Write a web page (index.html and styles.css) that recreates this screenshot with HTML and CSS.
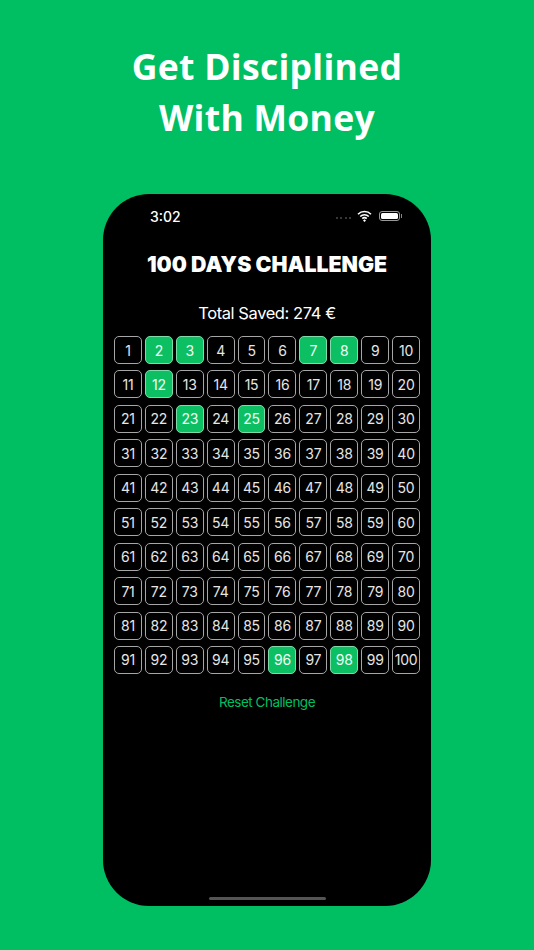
FILE: index.html
```html
<!DOCTYPE html>
<html lang="en">
<head>
<meta charset="utf-8">
<title>100 Days Challenge</title>
<link rel="stylesheet" href="styles.css">
</head>
<body>
<h1 class="headline">Get Disciplined<br>With Money</h1>
<main class="phone">
  <div class="status">
    <span class="time">3:02</span>
    <span class="status-icons">
      <span class="signal"><i></i><i></i><i></i><i></i></span>
      <svg class="wifi" width="15" height="12" viewBox="0 0 15 12"><path d="M1 4.2a9.2 9.2 0 0 1 13 0M3.2 6.5a6 6 0 0 1 8.6 0M5.3 8.6a3 3 0 0 1 4.4 0" fill="none" stroke="#fff" stroke-width="1.6"/><path d="M7.5 9.2l1.5 1.4-1.5 1.4-1.5-1.4z" fill="#fff"/></svg>
      <span class="battery"><span class="battery-fill"></span></span><span class="battery-cap"></span>
    </span>
  </div>
  <h2 class="title">100 DAYS CHALLENGE</h2>
  <p class="total">Total Saved: 274 €</p>
  <div class="grid">
    <div class="cell">1</div><div class="cell on">2</div><div class="cell on">3</div><div class="cell">4</div><div class="cell">5</div><div class="cell">6</div><div class="cell on">7</div><div class="cell on">8</div><div class="cell">9</div><div class="cell">10</div>
    <div class="cell">11</div><div class="cell on">12</div><div class="cell">13</div><div class="cell">14</div><div class="cell">15</div><div class="cell">16</div><div class="cell">17</div><div class="cell">18</div><div class="cell">19</div><div class="cell">20</div>
    <div class="cell">21</div><div class="cell">22</div><div class="cell on">23</div><div class="cell">24</div><div class="cell on">25</div><div class="cell">26</div><div class="cell">27</div><div class="cell">28</div><div class="cell">29</div><div class="cell">30</div>
    <div class="cell">31</div><div class="cell">32</div><div class="cell">33</div><div class="cell">34</div><div class="cell">35</div><div class="cell">36</div><div class="cell">37</div><div class="cell">38</div><div class="cell">39</div><div class="cell">40</div>
    <div class="cell">41</div><div class="cell">42</div><div class="cell">43</div><div class="cell">44</div><div class="cell">45</div><div class="cell">46</div><div class="cell">47</div><div class="cell">48</div><div class="cell">49</div><div class="cell">50</div>
    <div class="cell">51</div><div class="cell">52</div><div class="cell">53</div><div class="cell">54</div><div class="cell">55</div><div class="cell">56</div><div class="cell">57</div><div class="cell">58</div><div class="cell">59</div><div class="cell">60</div>
    <div class="cell">61</div><div class="cell">62</div><div class="cell">63</div><div class="cell">64</div><div class="cell">65</div><div class="cell">66</div><div class="cell">67</div><div class="cell">68</div><div class="cell">69</div><div class="cell">70</div>
    <div class="cell">71</div><div class="cell">72</div><div class="cell">73</div><div class="cell">74</div><div class="cell">75</div><div class="cell">76</div><div class="cell">77</div><div class="cell">78</div><div class="cell">79</div><div class="cell">80</div>
    <div class="cell">81</div><div class="cell">82</div><div class="cell">83</div><div class="cell">84</div><div class="cell">85</div><div class="cell">86</div><div class="cell">87</div><div class="cell">88</div><div class="cell">89</div><div class="cell">90</div>
    <div class="cell">91</div><div class="cell">92</div><div class="cell">93</div><div class="cell">94</div><div class="cell">95</div><div class="cell on">96</div><div class="cell">97</div><div class="cell on">98</div><div class="cell">99</div><div class="cell">100</div>
  </div>
  <p class="reset">Reset Challenge</p>
  <div class="home-bar"></div>
</main>
</body>
</html>
```
FILE: styles.css
```css
* { box-sizing: border-box; }
html, body { margin: 0; height: 950px; overflow: hidden; }
body {
  background: #00bf63;
  font-family: Inter, "Liberation Sans", sans-serif;
  display: flex;
  flex-direction: column;
  align-items: center;
}
.headline {
  margin: 41px 0 0;
  height: 153px;
  color: #fff;
  font-family: "Open Sans", sans-serif;
  font-size: 35.5px;
  font-weight: 700;
  line-height: 51px;
  letter-spacing: 0.3px;
  text-align: center;
}
.phone {
  width: 328px;
  height: 712px;
  background: #000;
  border-radius: 46px;
  padding: 0 11px;
  display: flex;
  flex-direction: column;
  color: #fff;
}
.status {
  height: 44px;
  display: flex;
  justify-content: space-between;
  align-items: center;
  padding: 0 18px 0 36px;
}
.time { font-size: 14px; font-weight: 500; }
.status-icons { display: flex; align-items: center; }
.signal { display: flex; gap: 2.5px; margin-right: 6px; margin-top: 3px; }
.signal i { width: 2px; height: 2px; border-radius: 50%; background: #4a4a4a; }
.wifi { margin-right: 7px; }
.battery {
  width: 21px;
  height: 10px;
  border: 1px solid #999;
  border-radius: 3px;
  padding: 1px;
  display: flex;
}
.battery-fill { flex: 1; background: #fff; border-radius: 1.5px; }
.battery-cap { width: 1px; height: 4px; background: #888; margin-left: 1px; }
.title {
  margin: 14px 0 0;
  height: 24px;
  font-size: 21.3px;
  font-weight: 900;
  line-height: 24px;
  text-align: center;
}
.total {
  margin: 26px 0 0;
  height: 20px;
  font-size: 16.5px;
  line-height: 22px;
  letter-spacing: -0.42px;
  text-align: center;
}
.grid {
  margin-top: 14px;
  display: grid;
  grid-template-columns: repeat(10, 1fr);
  grid-auto-rows: 28px;
  column-gap: 3px;
  row-gap: 6.44px;
}
.cell {
  border: 1.2px solid #a6a6a6;
  border-radius: 5px;
  display: flex;
  align-items: center;
  justify-content: center;
  font-size: 14px;
  font-weight: 400;
  color: #e6e6e6;
  letter-spacing: -0.25px;
}
.cell.on { background: #0dbf63; border-color: #7fdca8; color: #f0fff6; }
.reset {
  margin: 19px 0 0;
  color: #00bf63;
  font-size: 13.5px;
  line-height: 18px;
  letter-spacing: -0.5px;
  text-align: center;
}
.home-bar {
  margin: auto auto 6px;
  width: 117px;
  height: 3.5px;
  border-radius: 2px;
  background: #555;
}
```
